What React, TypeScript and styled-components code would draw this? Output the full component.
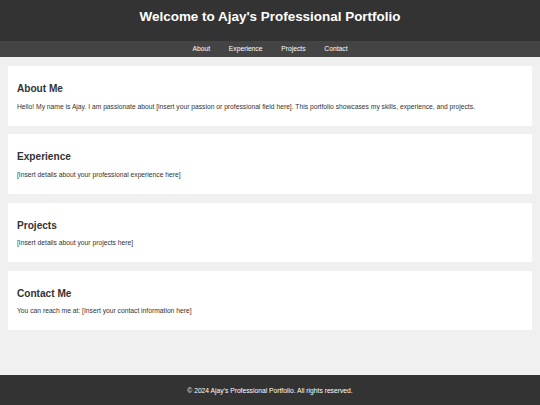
import styled, { createGlobalStyle } from "styled-components";

const GlobalStyle = createGlobalStyle`
  html, body {
    margin: 0;
    padding: 0;
  }
  body {
    font-family: "Liberation Sans", Arial, sans-serif;
    background-color: #f0f0f0;
    color: #333;
  }
`;

const Page = styled.div`
  display: flex;
  flex-direction: column;
  min-height: 100vh;
`;

const Header = styled.header`
  background-color: #333;
  color: #fff;
  text-align: center;
  padding: 9px 0 17px;
`;

const Title = styled.h1`
  margin: 0;
  font-size: 13.44px;
  line-height: 15px;
  font-weight: bold;
`;

const Nav = styled.nav`
  background-color: #444;
  height: 16px;
  display: flex;
  justify-content: center;
  align-items: center;
  gap: 18.8px;
`;

const NavLink = styled.a`
  color: #fff;
  text-decoration: none;
  font-size: 6.72px;
  line-height: 8px;
`;

const Main = styled.main`
  flex: 1;
  display: flex;
  flex-direction: column;
  gap: 8.7px;
  padding: 9px 8px 0;
`;

const Section = styled.section`
  background-color: #fff;
  padding: 17px 9px 15px;
`;

const Heading = styled.h2`
  margin: 0 0 7.6px;
  font-size: 10.1px;
  line-height: 12px;
  font-weight: bold;
  color: #333;
`;

const Text = styled.p`
  margin: 0;
  font-size: 6.72px;
  line-height: 8px;
  color: #333;
`;

const Footer = styled.footer`
  background-color: #333;
  color: #fff;
  height: 30px;
  display: flex;
  align-items: center;
  justify-content: center;
  font-size: 6.72px;
`;

const links = ["About", "Experience", "Projects", "Contact"];

const sections = [
  {
    id: "about",
    title: "About Me",
    body: "Hello! My name is Ajay. I am passionate about [insert your passion or professional field here]. This portfolio showcases my skills, experience, and projects.",
  },
  {
    id: "experience",
    title: "Experience",
    body: "[Insert details about your professional experience here]",
  },
  {
    id: "projects",
    title: "Projects",
    body: "[Insert details about your projects here]",
  },
  {
    id: "contact",
    title: "Contact Me",
    body: "You can reach me at: [Insert your contact information here]",
  },
];

const App = () => {
  return (
    <Page>
      <GlobalStyle />
      <Header>
        <Title>Welcome to Ajay's Professional Portfolio</Title>
      </Header>
      <Nav>
        {links.map((l) => (
          <NavLink key={l} href={`#${l.toLowerCase()}`}>
            {l}
          </NavLink>
        ))}
      </Nav>

      <Main>
        {sections.map((s) => (
          <Section key={s.id} id={s.id}>
            <Heading>{s.title}</Heading>
            <Text>{s.body}</Text>
          </Section>
        ))}
      </Main>

      <Footer>© 2024 Ajay's Professional Portfolio. All rights reserved.</Footer>
    </Page>
  );
};

export default App;
